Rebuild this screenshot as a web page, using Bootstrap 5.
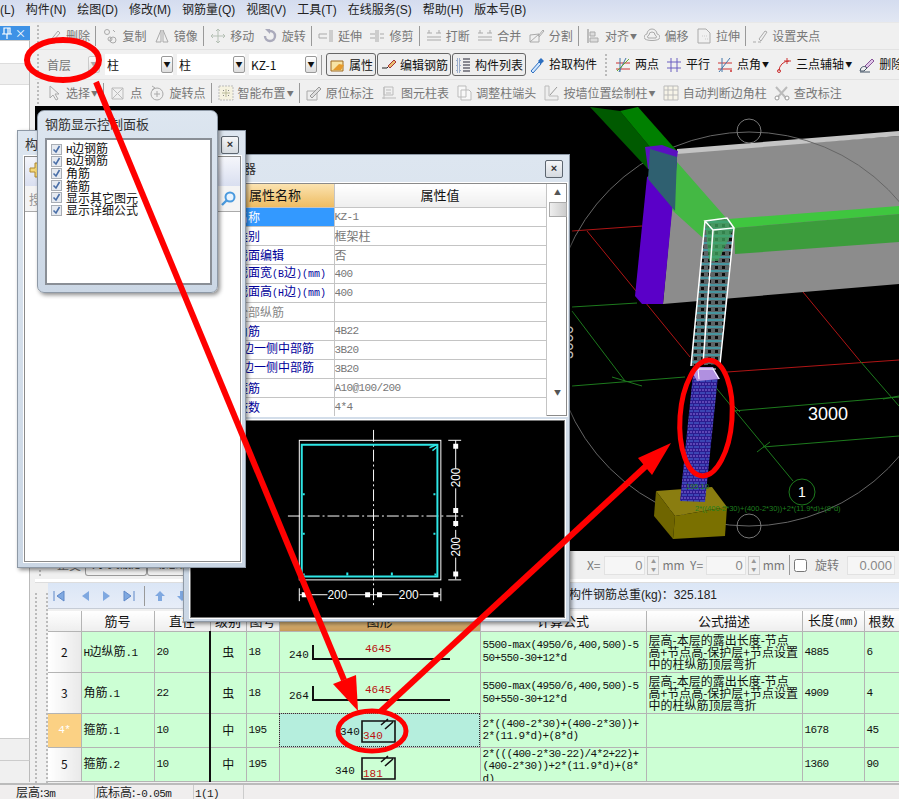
<!DOCTYPE html>
<html lang="zh">
<head>
  <meta charset="UTF-8">
  <title>钢筋显示控制面板</title>
  <link href="https://cdn.jsdelivr.net/npm/bootstrap@5.3.3/dist/css/bootstrap.min.css" rel="stylesheet">
  <style>
    html, body { margin: 0; background: #f0f0f0; }
    body { font: 12px/1.2 "Noto Sans CJK SC", sans-serif; color: #222; }
    .app { position: relative; width: 899px; height: 799px; overflow: hidden; }
    .menu-bar { height: 23px; gap: 11px; padding-top: 3px; background: linear-gradient(#d4dcef, #e2e7f3); border-bottom: 1px solid #e8e8e8; white-space: nowrap; font-family: "Liberation Sans", "Noto Sans CJK SC", sans-serif; }
    .work { height: 760px; }
    .dock { width: 30px; margin-right: 5px; padding-top: 3px; }
    .dock-head { height: 14px; background: #3e92e6; color: #fff; font-size: 11px; line-height: 14px; padding: 0 4px 0 2px; }
    .dock-pin { width: 10px; height: 12px; margin-top: 1px; }
    .dock-body { height: 698px; background: #fff; border-right: 1px solid #bbb; border-top: 1px solid #ccc; }
    .dock-band { height: 22px; margin-top: 22px; background: #f0f0f0; border-top: 1px solid #ddd; border-bottom: 1px solid #ddd; }
    .dock-foot { height: 22px; border-top: 1px solid #ccc; border-right: 1px solid #bbb; background: #f0f0f0; }
    .main-col { width: 864px; }
    .tool-row { white-space: nowrap; overflow: hidden; color: #777; padding-left: 2px; }
    .row-a { height: 27px; border-bottom: 1px solid #e2e2e2; }
    .row-b { height: 30px; border-bottom: 1px solid #e2e2e2; color: #111; }
    .row-c { height: 26px; }
    .grip { width: 2px; height: 22px; margin-right: 8px; border-left: 2px dotted #bbb; flex: none; }
    .row-a > .grip:first-child, .row-c > .grip:first-child { margin-right: 7px; }
    .row-b > .grip:first-child { margin-right: 6px; }
    .tool { display: inline-flex; align-items: center; gap: 4px; margin-right: 7.4px; }
    .row-b .tool { margin-right: 7px; }
    .row-c .tool { margin-right: 7.2px; }
    .ico { width: 16px; height: 16px; flex: none; }
    .tool-sep { width: 1px; height: 20px; background: #999; margin: 0 6px 0 -2px; flex: none; }
    .mini-caret { font-size: 7px; margin-left: -3px; }
    .combo { height: 21px; background: #fff; padding-left: 2px; line-height: 21px; margin-right: 4px; position: relative; width: 68px; flex: none; }
    .combo-off { background: #f0f0f0; color: #777; width: 55px; margin-right: 5px; }
    .combo-arrow { position: absolute; right: 0; top: 2px; width: 12px; height: 17px; background: linear-gradient(#fff, #ddd); border: 1px solid #999; border-radius: 2px; font-size: 7px; line-height: 15px; text-align: center; color: #111; }
    .combo-off .combo-arrow { color: #aaa; border-color: #ccc; }
    .press-btn { display: inline-flex; align-items: center; gap: 3px; height: 23px; padding: 0 2px 0 3px; margin-right: 1px; font-size: 12px; line-height: 1; color: #111; border: 1px solid #666; border-radius: 3px; background: #eee; flex: none; }
    .sep-tight { margin: 0 4px 0 0; }
    .pick-tool { margin-left: 2px; }
    .row-b .pick-tool { margin-right: 8px; }
    .view3d { height: 445px; background: #000; display: block; flex: none; }
    .opt-bar { height: 28px; color: #777; white-space: nowrap; }
    .opt-tab { height: 22px; padding: 2px 6px; border: 1px solid #999; border-top: 0; border-radius: 0 0 3px 3px; color: #333; }
    .opt-field { height: 19px; background: #f6f6f6; border: 1px solid #e2e2e2; text-align: right; padding-right: 2px; line-height: 17px; font-size: 13px; font-family: "Liberation Sans", sans-serif; color: #888; }
    .opt-spin { width: 12px; height: 19px; border: 1px solid #ccc; margin: 0 3px 0 2px; font-size: 5px; line-height: 8px; text-align: center; color: #999; }
    .strip { height: 4px; background: #fff; border-bottom: 1px solid #ddd; }
    .grid-grip { width: 13px; border-left: 2px dotted #bbb; border-right: 2px dotted #bbb; margin-top: 10px; }
    .nav-bar { height: 26px; margin-bottom: 2px; background: linear-gradient(#dbe6f6, #e7edf8); border-bottom: 1px solid #c6ccd6; white-space: nowrap; }
    .nav-ico { width: 14px; height: 14px; }
    .total-weight { margin-left: 364px; font-family: "Liberation Sans", "Noto Sans CJK SC", sans-serif; }
    .rebar-grid { table-layout: fixed; width: 851px; margin: 0; border-collapse: collapse; font-size: 12px; }
    .rebar-grid > :not(caption) > * > * { padding: 0 2px; border: 1px solid #b4b4b4; border-width: 0 1px 1px 0; background: #ccffd4; color: #111; vertical-align: middle; box-shadow: none; line-height: 12px; overflow: hidden; }
    .rebar-grid > thead > tr > th { height: 20px; background: linear-gradient(#fff, #eee); font-weight: 400; text-align: center; font-size: 13px; }
    .rebar-grid > thead > tr > th.col-on { background: linear-gradient(#f7dc9f, #c89a58); }
    .rebar-grid > tbody > tr > th { background: linear-gradient(90deg, #fff, #e9e9e9); font-weight: 400; text-align: center; }
    .rebar-grid > tbody > tr > th.row-on { background: #fbd184; color: #fff; }
    .rebar-grid td.split-col { border-right: 2px solid #111; }
    .rebar-grid td.shape-cell { padding: 0; }
    .rebar-grid td.shape-on { background: #b5eedd; outline: 1px dotted #333; outline-offset: -1px; }
    .shape-svg { display: block; width: 200px; }
    .formula-box { overflow: hidden; max-height: 36px; }
    .formula-clip { overflow: hidden; height: 33px; }
    .r-tall { height: 41px; } .r-short { height: 34px; }
    .lt { font-family: "Liberation Mono", monospace; font-size: 11px; letter-spacing: -.6px; }
    .rebar-grid td.lt-line { line-height: 12.5px; line-break: anywhere; padding-right: 5px; }
    .float-win { position: absolute; background: linear-gradient(#dde6f0, #cbd7e5); border: 1px solid #8e99a6; box-shadow: 2px 2px 4px rgba(0,0,0,.45); }
    .win-title { height: 25px; padding: 5px 0 0 7px; font-size: 13px; white-space: nowrap; color: #333; }
    .win-x { position: absolute; top: 5px; right: 6px; width: 18px; height: 18px; background: linear-gradient(#f5f6f8, #d5dae0); border: 1px solid #5d6670; border-radius: 2px; font: 700 11px/15px "Liberation Sans", sans-serif; text-align: center; color: #333; }
    .win-well { border: 1px solid #8a8a8a; outline: 1px solid #fff; background: #fff; }
    .win-props { left: 183px; top: 154px; width: 387px; height: 468px; }
    .win-list { left: 17px; top: 130px; width: 229px; height: 438px; }
    .win-panel { left: 37px; top: 110px; width: 181px; height: 183px; border-radius: 7px; }
    .panel-well { position: absolute; left: 7px; top: 27px; width: 167px; height: 147px; border: 2px solid #8a8f96; outline: 1px solid #fff; outline-offset: -3px; background: #fff; padding: 3px 0 0 4px; }
    .panel-check { display: flex; align-items: center; height: 12.2px; gap: 4px; font-size: 12px; line-height: 12px; color: #111; white-space: nowrap; }
    .panel-check input { appearance: none; width: 11px; height: 11px; margin: 0; flex: none; border: 1px solid #a9aeb5; background: #e6eaf0 url("data:image/svg+xml,%3Csvg xmlns='http://www.w3.org/2000/svg' viewBox='0 0 9 9'%3E%3Cpath d='M1.5 4.5 4 7l3.5-6' fill='none' stroke='%234a6fa8' stroke-width='1.6'/%3E%3C/svg%3E") center/9px no-repeat; }
    .list-well { position: absolute; left: 6px; top: 25px; width: 217px; height: 406px; }
    .list-strip { height: 29px; background: linear-gradient(#f5f6fb, #d9dff0); padding: 4px; }
    .list-search { height: 26px; background: #f4f4f4; border-bottom: 1px solid #aaa; color: #999; padding: 3px 4px; font-size: 13px; }
    .prop-well { position: absolute; left: 3px; top: 28px; width: 380px; height: 233px; }
    .prop-grid { table-layout: fixed; width: 358px; margin: 0; border-collapse: collapse; }
    .prop-grid > :not(caption) > * > * { padding: 0; height: 19px; border: 1px solid #c4c4c4; border-width: 0 1px 1px 0; background: #fff; color: #777; box-shadow: none; line-height: 12px; white-space: nowrap; overflow: hidden; vertical-align: middle; }
    .prop-grid > thead > tr > th { height: 23px; font-weight: 400; text-align: center; font-size: 13px; color: #111; background: linear-gradient(#fff, #eee); }
    .prop-grid > thead > tr > th.col-name { background: linear-gradient(#fbe3b0, #eebc62); text-align: left; padding-left: 61px; }
    .prop-grid > tbody > tr > td:first-child { padding-left: 48px; color: #00009a; }
    .prop-grid > tbody > tr > td.name-off { color: #888; }
    .prop-grid > tbody > tr > td.name-on { background: #3399ff; color: #fff; }
    .prop-grid .lt { color: #777; }
    .name-lt { font-family: "Liberation Mono", monospace; font-size: 10px; }
    .scroll-track { width: 18px; margin-left: 2px; font-size: 7px; text-align: center; color: #555; padding-top: 4px; }
    .scroll-thumb { height: 15px; margin: 6px 0 171px; background: linear-gradient(90deg, #eee, #ccc); border: 1px solid #aaa; }
    .cad-view { position: absolute; left: 6px; top: 265px; width: 375px; height: 198px; background: #000; border: 1px solid #777; outline: 1px solid #fff; display: block; }
    .status-bar { height: 16px; background: #f0eeee; border-top: 2px solid #bbb; white-space: nowrap; line-height: 14px; overflow: hidden; }
    .status-cell { border-right: 1px solid #ccc; padding-left: 1px; }
    .marks { position: absolute; left: 0; top: 0; width: 899px; height: 799px; pointer-events: none; }
  </style>
</head>
<body>
  <svg width="0" height="0" class="position-absolute">
    <symbol id="i-del" viewBox="0 0 16 16"><path d="M4 13 12 3l2 2-7 8zM2 15h7" fill="none" stroke="#aaa"/></symbol>
    <symbol id="i-copy" viewBox="0 0 16 16"><g fill="none" stroke="#aaa"><circle cx="5" cy="4" r="2.5"/><circle cx="11" cy="12" r="3"/><circle cx="8" cy="11" r="2"/><path d="m11 2 2 2"/></g></symbol>
    <symbol id="i-mirror" viewBox="0 0 16 16"><path d="M2 14 7 2v12zM14 14 9 2v12z" fill="none" stroke="#aaa"/></symbol>
    <symbol id="i-move" viewBox="0 0 16 16"><path d="M8 1v14M1 8h14M6 3l2-2 2 2M6 13l2 2 2-2M3 6 1 8l2 2M13 6l2 2-2 2" fill="none" stroke="#b5c0b5"/></symbol>
    <symbol id="i-rotate" viewBox="0 0 16 16"><path d="M8 3a5 5 0 1 1-5 5" fill="none" stroke="#aab" stroke-width="2.4"/><path d="M3 1h5v5z" fill="#aab"/></symbol>
    <symbol id="i-extend" viewBox="0 0 16 16"><path d="M1 6h8M1 10h8M1 6v4M12 2v12M14 2v12" fill="none" stroke="#aaa"/></symbol>
    <symbol id="i-trim" viewBox="0 0 16 16"><path d="M7 2v12M9 2v12M1 6h5M1 10h5M11 6h4M11 10h4" fill="none" stroke="#aaa"/></symbol>
    <symbol id="i-break" viewBox="0 0 16 16"><path d="M1 5h5M10 5h5M1 12h14M1 9h14M3 2v3M13 2v3" fill="none" stroke="#aaa"/></symbol>
    <symbol id="i-split" viewBox="0 0 16 16"><path d="M1 14V7l9-1v8zM1 14l9-8M9 8l5-6 1 1-5 6" fill="none" stroke="#aaa"/></symbol>
    <symbol id="i-align" viewBox="0 0 16 16"><path d="M3 1v14" stroke="#888" fill="none"/><path d="M5 4h5v4H5zM5 10h8v4H5z" fill="#ddd" stroke="#aaa"/></symbol>
    <symbol id="i-offset" viewBox="0 0 16 16"><path d="M1 11a3 3 0 0 1 2-5 5 5 0 0 1 10 0 3 3 0 0 1 2 5c-3 2-11 2-14 0zM4 10a2 2 0 0 1 1-3 3 3 0 0 1 6 0 2 2 0 0 1 1 3z" fill="none" stroke="#aaa"/></symbol>
    <symbol id="i-stretch" viewBox="0 0 16 16"><path d="M2 1h8l4 4v10H2z" fill="none" stroke="#aaa"/><path d="M6 8h6M9 11h3" stroke="#ccc" stroke-dasharray="1 1"/></symbol>
    <symbol id="i-clip" viewBox="0 0 16 16"><path d="m7 11 6-8 2 1-6 9zM1 14h3M6 14h3" fill="none" stroke="#aaa"/></symbol>
    <symbol id="i-prop" viewBox="0 0 16 16"><path d="M1 4h12v10H1z" fill="#f7e3a4" stroke="#a06a20"/><path d="M3 13 9 7l5 1-3 5z" fill="#e59a2c"/></symbol>
    <symbol id="i-edit" viewBox="0 0 16 16"><path d="M1 11h5l3-3" fill="none" stroke="#222"/><path d="m7 9 6-6 2 2-6 6z" fill="#e8c070" stroke="#a33"/></symbol>
    <symbol id="i-list" viewBox="0 0 16 16"><path d="M1 2h3v3H1zM1 7h3v3H1zM1 12h3v3H1z" fill="none" stroke="#4a6fa8" stroke-dasharray="1 1"/><path d="M7 2h7M7 5h7M7 8h7M7 11h7M7 14h7" stroke="#223"/></symbol>
    <symbol id="i-pick" viewBox="0 0 16 16"><path d="m2 14 8-9 2 2-8 9z" fill="#cfe6ff" stroke="#2d6fc0"/><path d="m9 4 3-3 3 3-3 3z" fill="#2d6fc0"/></symbol>
    <symbol id="i-two" viewBox="0 0 16 16"><path d="M1 6h14M1 12h14" stroke="#c33" fill="none"/><path d="M5 1v14M11 1 4 15" stroke="#47a" fill="none"/><path d="M2 14 14 2" stroke="#6a3"/></symbol>
    <symbol id="i-par" viewBox="0 0 16 16"><path d="M1 5h14M1 11h14M5 1v14M11 1v14" stroke="#6a5fc0" fill="none"/></symbol>
    <symbol id="i-ang" viewBox="0 0 16 16"><path d="M1 6h14M1 12h14" stroke="#c33" fill="none"/><path d="M5 1v14M2 15 13 1" stroke="#47a" fill="none"/><circle cx="14" cy="14" r="1" fill="#c33"/></symbol>
    <symbol id="i-three" viewBox="0 0 16 16"><path d="M3 14a10 10 0 0 1 10-10" fill="none" stroke="#c33"/><path d="M11 1v6M8 4h7" stroke="#c33"/><circle cx="3" cy="14" r="1.5" fill="none" stroke="#c33"/></symbol>
    <symbol id="i-erase" viewBox="0 0 16 16"><path d="m6 9 7-7 2 2-7 7z" fill="#e0c8e8" stroke="#859"/><path d="M2 11c2-2 4-2 6 0l-3 3H1zM1 15h10" fill="none" stroke="#456"/></symbol>
    <symbol id="i-sel" viewBox="0 0 16 16"><path d="M4 1v12l3-3 3 5 2-1-3-5h4z" fill="none" stroke="#aaa"/></symbol>
    <symbol id="i-pt" viewBox="0 0 16 16"><path d="M2 3h11v11H2zM2 3l11 11M13 3 2 14" fill="none" stroke="#bbb"/></symbol>
    <symbol id="i-rpt" viewBox="0 0 16 16"><circle cx="8" cy="9" r="6" fill="none" stroke="#aaa"/><path d="M8 6v6M5 9h6M3 1l3 2-3 2" fill="none" stroke="#aaa"/></symbol>
    <symbol id="i-smart" viewBox="0 0 16 16"><path d="M1 1h14v14H1z" fill="#f5f2e0" stroke="#bbb" stroke-dasharray="2 1"/><path d="M5 5h1v1H5zM10 5h1v1h-1zM5 10h1v1H5zM10 10h1v1h-1z" fill="#888"/><path d="M8 4v8M4 8h8" stroke="#bb9"/></symbol>
    <symbol id="i-pos" viewBox="0 0 16 16"><path d="M1 15V6h10v9z" fill="#eee" stroke="#aaa"/><path d="m4 11 9-9 2 2-9 9z" fill="#ddd" stroke="#999"/></symbol>
    <symbol id="i-tbl" viewBox="0 0 16 16"><path d="M3 2h9v8H3zM1 13h14M3 2v12M5 5h5M5 8h5" fill="none" stroke="#bbb"/></symbol>
    <symbol id="i-adj" viewBox="0 0 16 16"><path d="M2 1h8v11H2zM5 5h8l2 2v8H5z" fill="#f8f8f8" stroke="#bbb"/></symbol>
    <symbol id="i-wall" viewBox="0 0 16 16"><path d="M2 1h4v10h9v4H2z" fill="#eee" stroke="#bbb"/><path d="m7 10 7-8" stroke="#999"/></symbol>
    <symbol id="i-auto" viewBox="0 0 16 16"><path d="M1 1h14v14H1zM1 5h14M1 10h14M5 1v14M10 1v14" fill="#f7f4e8" stroke="#bbb"/></symbol>
    <symbol id="i-chk" viewBox="0 0 16 16"><path d="m2 2 10 11M13 2 3 13" stroke="#bbb" stroke-width="2" fill="none"/><circle cx="3" cy="13" r="2" fill="#fff" stroke="#999"/><circle cx="13" cy="13" r="2" fill="#fff" stroke="#999"/></symbol>
  </svg>

  <div class="app d-flex flex-column">
    <div class="menu-bar d-flex">
      <span>(L)</span><span>构件(N)</span><span>绘图(D)</span><span>修改(M)</span><span>钢筋量(Q)</span><span>视图(V)</span><span>工具(T)</span><span>在线服务(S)</span><span>帮助(H)</span><span>版本号(B)</span>
    </div>
    <div class="work d-flex">
      <div class="dock flex-shrink-0">
        <div class="dock-head d-flex justify-content-between">
          <svg class="dock-pin" viewBox="0 0 10 12"><path d="M2 1h6v6H2zM0 7h10M5 7v5M6 1v6" fill="none" stroke="#fff" stroke-width="1.2"/></svg><span>×</span>
        </div>
        <div class="dock-body"><div class="dock-band"></div></div>
        <div class="dock-foot"></div>
        <div class="dock-foot"></div>
      </div>
      <div class="main-col flex-shrink-0 d-flex flex-column">
        <div class="tool-row row-a d-flex align-items-center">
          <span class="grip"></span>
          <span class="tool"><svg class="ico"><use href="#i-del"/></svg>删除</span><span class="tool-sep"></span>
          <span class="tool"><svg class="ico"><use href="#i-copy"/></svg>复制</span>
          <span class="tool"><svg class="ico"><use href="#i-mirror"/></svg>镜像</span><span class="tool-sep"></span>
          <span class="tool"><svg class="ico"><use href="#i-move"/></svg>移动</span>
          <span class="tool"><svg class="ico"><use href="#i-rotate"/></svg>旋转</span><span class="tool-sep"></span>
          <span class="tool"><svg class="ico"><use href="#i-extend"/></svg>延伸</span>
          <span class="tool"><svg class="ico"><use href="#i-trim"/></svg>修剪</span><span class="tool-sep"></span>
          <span class="tool"><svg class="ico"><use href="#i-break"/></svg>打断</span>
          <span class="tool"><svg class="ico"><use href="#i-break"/></svg>合并</span>
          <span class="tool"><svg class="ico"><use href="#i-split"/></svg>分割</span><span class="tool-sep"></span>
          <span class="tool"><svg class="ico"><use href="#i-align"/></svg>对齐<span class="mini-caret">▼</span></span>
          <span class="tool"><svg class="ico"><use href="#i-offset"/></svg>偏移</span>
          <span class="tool"><svg class="ico"><use href="#i-stretch"/></svg>拉伸</span><span class="tool-sep"></span>
          <span class="tool"><svg class="ico"><use href="#i-clip"/></svg>设置夹点</span>
        </div>
        <div class="tool-row row-b d-flex align-items-center">
          <span class="grip"></span>
          <div class="combo combo-off">首层<span class="combo-arrow">▼</span></div>
          <div class="combo">柱<span class="combo-arrow">▼</span></div>
          <div class="combo">柱<span class="combo-arrow">▼</span></div>
          <div class="combo">KZ-1<span class="combo-arrow">▼</span></div>
          <span class="tool-sep sep-tight"></span>
          <button type="button" class="btn press-btn"><svg class="ico"><use href="#i-prop"/></svg>属性</button>
          <button type="button" class="btn press-btn"><svg class="ico"><use href="#i-edit"/></svg>编辑钢筋</button>
          <button type="button" class="btn press-btn"><svg class="ico"><use href="#i-list"/></svg>构件列表</button>
          <span class="tool pick-tool"><svg class="ico"><use href="#i-pick"/></svg>拾取构件</span>
          <span class="grip"></span>
          <span class="tool"><svg class="ico"><use href="#i-two"/></svg>两点</span>
          <span class="tool"><svg class="ico"><use href="#i-par"/></svg>平行</span>
          <span class="tool"><svg class="ico"><use href="#i-ang"/></svg>点角<span class="mini-caret">▼</span></span>
          <span class="tool"><svg class="ico"><use href="#i-three"/></svg>三点辅轴<span class="mini-caret">▼</span></span>
          <span class="tool"><svg class="ico"><use href="#i-erase"/></svg>删除</span>
        </div>
        <div class="tool-row row-c d-flex align-items-center">
          <span class="grip"></span>
          <span class="tool"><svg class="ico"><use href="#i-sel"/></svg>选择<span class="mini-caret">▼</span></span><span class="tool-sep"></span>
          <span class="tool"><svg class="ico"><use href="#i-pt"/></svg>点</span>
          <span class="tool"><svg class="ico"><use href="#i-rpt"/></svg>旋转点</span><span class="tool-sep"></span>
          <span class="tool"><svg class="ico"><use href="#i-smart"/></svg>智能布置<span class="mini-caret">▼</span></span><span class="tool-sep"></span>
          <span class="tool"><svg class="ico"><use href="#i-pos"/></svg>原位标注</span>
          <span class="tool"><svg class="ico"><use href="#i-tbl"/></svg>图元柱表</span>
          <span class="tool"><svg class="ico"><use href="#i-adj"/></svg>调整柱端头</span>
          <span class="tool"><svg class="ico"><use href="#i-wall"/></svg>按墙位置绘制柱<span class="mini-caret">▼</span></span>
          <span class="tool"><svg class="ico"><use href="#i-auto"/></svg>自动判断边角柱</span>
          <span class="tool"><svg class="ico"><use href="#i-chk"/></svg>查改标注</span>
        </div>

        <svg class="view3d" width="864" height="445" viewBox="35 107 864 445">
          <defs>
            <pattern id="hatch-top" width="7" height="7" patternUnits="userSpaceOnUse">
              <rect width="7" height="7" fill="#5c6466"/><rect x="1" y="1" width="3" height="3" fill="#0c0c0c"/><path d="M0 6h7" stroke="#2fc6d8"/>
            </pattern>
            <pattern id="hatch-low" width="6" height="6" patternUnits="userSpaceOnUse">
              <rect width="6" height="6" fill="#2c1c90"/><path d="M0 1h6" stroke="#8f70dc" stroke-dasharray="2 1"/><path d="M0 4h6" stroke="#4a70d8" stroke-dasharray="3 1"/>
            </pattern>
          </defs>
          <polygon points="677,153 899,137 899,285 663,305" fill="#8c8c8c"/>
          <polygon points="677,150 899,132 899,137 677,155" fill="#c4c4c4"/>
          <g stroke-width="1" fill="none">
            <path d="M572 232 642 227M587 232 690 358M727 373 899 361M803 293 860 362" stroke="#b01515"/>
            <path d="M572 308 637 304M572 312 625 382M572 387 685 378M612 378 642 387M713 385 793 482M733 412 899 398M733 406 740 413M763 448 899 437M757 453 770 443M860 362 899 407M883 400 899 397" stroke="#1d7a1d"/>
            <circle cx="749" cy="330" r="197" stroke="#666"/>
            <circle cx="749" cy="132" r="12" stroke="#777"/>
            <circle cx="749" cy="527" r="12" stroke="#777"/>
            <circle cx="802" cy="493" r="13" stroke="#1d7a1d"/>
          </g>
          <polygon points="590,108 620,112 650,148 648,170" fill="#005a00"/>
          <polygon points="620,112 638,108 677,152 650,148" fill="#008000"/>
          <polygon points="648,168 677,152 677,163 727,220 704,240 673,212" fill="#44b844"/>
          <polygon points="645,148 662,146 678,152 676,165 648,170" fill="#5a10c0"/>
          <polygon points="647,178 677,162 663,305 642,305 635,297" fill="#5a00c8"/>
          <polygon points="650,150 677,158 675,212 648,180" fill="#2f6070"/>
          <polygon points="728,220 899,207 899,215 734,229" fill="#3fc63f"/>
          <polygon points="734,229 899,215 899,243 735,255" fill="#3c9c3c"/>
          <polygon points="705,222 727,219 734,229 720,365 691,367" fill="url(#hatch-top)"/>
          <polygon points="705,222 727,219 734,229 718,262 709,262" fill="#3fa860" opacity=".75"/>
          <path d="M705 222 727 219 734 229 713 231zM705 222 691 367M713 231 703 365M734 229 720 365" fill="none" stroke="#fff" stroke-width="1.5"/>
          <polygon points="656,492 712,488 727,508 675,517" fill="#8a7d10"/>
          <polygon points="656,492 675,517 673,540 654,517" fill="#6f6500"/>
          <polygon points="675,517 727,508 725,537 673,540" fill="#7a7000"/>
          <polygon points="693,375 718,377 705,503 680,502" fill="url(#hatch-low)"/>
          <polygon points="693,375 698,368 713,368 720,380 697,382" fill="#b090e0"/>
          <path d="M698 370 699 380M713 370 719 380M698 370H716" stroke="#fff" fill="none"/>
          <text x="808" y="421" font-family="Liberation Sans, sans-serif" font-size="18" fill="#fff">3000</text>
          <text x="798" y="498" font-family="Liberation Sans, sans-serif" font-size="14" fill="#fff">1</text>
          <text x="695" y="512" font-family="Liberation Sans, sans-serif" font-size="7.5" fill="#1f7f1f">2*((400-2*30)+(400-2*30))+2*(11.9*d)+(8*d)</text>
          <text x="686" y="490" font-family="Liberation Sans, sans-serif" font-size="7.5" fill="#1f7f1f">195:10</text>
          <text transform="translate(573 360) rotate(-90)" font-family="Liberation Sans, sans-serif" font-size="15" fill="#fff">3000</text>
        </svg>

        <div class="opt-bar d-flex align-items-center">
          <span class="grip ms-1 me-3"></span>
          <span class="me-1">正交</span>
          <span class="opt-tab">对象捕捉</span>
          <span class="opt-tab">动态输入</span>
          <span class="ms-auto me-1">X=</span>
          <span class="opt-field" style="width:41px">0</span><span class="opt-spin">▲<br>▼</span>
          <span>mm&nbsp;&nbsp;Y=&nbsp;</span>
          <span class="opt-field" style="width:40px">0</span><span class="opt-spin">▲<br>▼</span>
          <span>mm</span>
          <span class="tool-sep ms-1 me-1"></span>
          <input type="checkbox" class="me-2">
          <span class="me-2">旋转</span>
          <span class="opt-field me-1" style="width:48px">0.000</span>
        </div>
        <div class="strip"></div>

        <div class="d-flex flex-grow-1">
          <div class="grid-grip flex-shrink-0"></div>
          <div class="flex-grow-1">
            <div class="nav-bar d-flex align-items-center ps-1">
              <svg class="nav-ico me-2" viewBox="0 0 14 14"><path d="M2 2v10M12 2v10L5 7z" fill="#7fa8e0" stroke="#5f88c8"/></svg>
              <svg class="nav-ico mx-1" viewBox="0 0 14 14"><path d="M11 2v10L4 7z" fill="#7fa8e0"/></svg>
              <svg class="nav-ico mx-1" viewBox="0 0 14 14"><path d="M3 2v10l7-5z" fill="#7fa8e0"/></svg>
              <svg class="nav-ico mx-1" viewBox="0 0 14 14"><path d="M12 2v10M2 2v10l7-5z" fill="#7fa8e0" stroke="#5f88c8"/></svg>
              <span class="tool-sep mx-1"></span>
              <svg class="nav-ico mx-1" viewBox="0 0 14 14"><path d="M7 2 2 7h3v5h4V7h3z" fill="#7fa8e0"/></svg>
              <svg class="nav-ico mx-1" viewBox="0 0 14 14"><path d="M7 12 2 7h3V2h4v5h3z" fill="#7fa8e0"/></svg>
              <span class="total-weight">单构件钢筋总重(kg)：325.181</span>
            </div>
            <table class="table rebar-grid">
              <colgroup><col width="33"><col width="73"><col width="56"><col width="36"><col width="33"><col width="201"><col width="166"><col width="156"><col width="62"><col width="35"></colgroup>
              <thead>
                <tr><th></th><th>筋号</th><th>直径</th><th>级别</th><th>图号</th><th class="col-on">图形</th><th>计算公式</th><th>公式描述</th><th>长度<span class="lt">(mm)</span></th><th>根数</th></tr>
              </thead>
              <tbody>
                <tr class="r-tall">
                  <th>2</th><td><span class="lt">H</span>边纵筋<span class="lt">.1</span></td><td class="split-col lt">20</td><td class="text-center">虫</td><td class="lt">18</td>
                  <td class="shape-cell"><svg class="shape-svg" height="40" viewBox="0 0 200 40"><text x="9" y="26" font-family="Liberation Mono, monospace" font-size="11" fill="#111">240</text><path d="M33 13v14h137" fill="none" stroke="#111" stroke-width="2"/><text x="85" y="20" font-family="Liberation Mono, monospace" font-size="11" fill="#b11">4645</text></svg></td>
                  <td class="lt lt-line">5500-max(4950/6,400,500)-550+550-30+12*d</td>
                  <td><div class="formula-box">层高-本层的露出长度-节点高+节点高-保护层+节点设置中的柱纵筋顶层弯折</div></td>
                  <td class="lt">4885</td><td class="lt">6</td>
                </tr>
                <tr class="r-tall">
                  <th>3</th><td>角筋<span class="lt">.1</span></td><td class="split-col lt">22</td><td class="text-center">虫</td><td class="lt">18</td>
                  <td class="shape-cell"><svg class="shape-svg" height="40" viewBox="0 0 200 40"><text x="9" y="26" font-family="Liberation Mono, monospace" font-size="11" fill="#111">264</text><path d="M33 13v14h137" fill="none" stroke="#111" stroke-width="2"/><text x="85" y="20" font-family="Liberation Mono, monospace" font-size="11" fill="#b11">4645</text></svg></td>
                  <td class="lt lt-line">5500-max(4950/6,400,500)-550+550-30+12*d</td>
                  <td><div class="formula-box">层高-本层的露出长度-节点高+节点高-保护层+节点设置中的柱纵筋顶层弯折</div></td>
                  <td class="lt">4909</td><td class="lt">4</td>
                </tr>
                <tr class="r-short">
                  <th class="row-on lt">4*</th><td>箍筋<span class="lt">.1</span></td><td class="split-col lt">10</td><td class="text-center">中</td><td class="lt">195</td>
                  <td class="shape-cell shape-on"><svg class="shape-svg" height="33" viewBox="0 0 200 33"><text x="60" y="21" font-family="Liberation Mono, monospace" font-size="11" fill="#111">340</text><path d="M82 7h33v21H82zM105 15l8-7M101 11l7-6" fill="none" stroke="#111" stroke-width="1.6"/><text x="83" y="25" font-family="Liberation Mono, monospace" font-size="11" fill="#b11">340</text></svg></td>
                  <td class="lt lt-line">2*((400-2*30)+(400-2*30))+2*(11.9*d)+(8*d)</td>
                  <td></td><td class="lt">1678</td><td class="lt">45</td>
                </tr>
                <tr class="r-short">
                  <th>5</th><td>箍筋<span class="lt">.2</span></td><td class="split-col lt">10</td><td class="text-center">中</td><td class="lt">195</td>
                  <td class="shape-cell"><svg class="shape-svg" height="33" viewBox="0 0 200 33"><text x="55" y="26" font-family="Liberation Mono, monospace" font-size="11" fill="#111">340</text><path d="M82 10h33v21H82zM105 18l8-7M101 14l7-6" fill="none" stroke="#111" stroke-width="1.6"/><text x="83" y="29" font-family="Liberation Mono, monospace" font-size="11" fill="#b11">181</text></svg></td>
                  <td class="lt lt-line"><div class="formula-clip">2*(((400-2*30-22)/4*2+22)+(400-2*30))+2*(11.9*d)+(8*d)</div></td>
                  <td></td><td class="lt">1360</td><td class="lt">90</td>
                </tr>
              </tbody>
            </table>
          </div>
        </div>
      </div>
    </div>
    <div class="status-bar d-flex">
      <span class="status-cell ps-3" style="width:95px">层高:<span class="lt">3m</span></span>
      <span class="status-cell" style="width:99px">底标高:<span class="lt">-0.05m</span></span>
      <span class="status-cell" style="width:50px"><span class="lt">1(1)</span></span>
    </div>

    <!-- floating windows, back to front -->
    <div class="float-win win-props">
      <div class="win-title">属性编辑器</div>
      <span class="win-x">×</span>
      <div class="prop-well win-well d-flex">
        <table class="table prop-grid">
          <colgroup><col width="146"><col width="212"></colgroup>
          <thead><tr><th class="col-name">属性名称</th><th>属性值</th></tr></thead>
          <tbody>
            <tr><td class="name-on">名称</td><td class="lt">KZ-1</td></tr>
            <tr><td>类别</td><td>框架柱</td></tr>
            <tr><td>截面编辑</td><td>否</td></tr>
            <tr><td>截面宽<span class="name-lt">(B</span>边<span class="name-lt">)(mm)</span></td><td class="lt">400</td></tr>
            <tr><td>截面高<span class="name-lt">(H</span>边<span class="name-lt">)(mm)</span></td><td class="lt">400</td></tr>
            <tr><td class="name-off">全部纵筋</td><td></td></tr>
            <tr><td>角筋</td><td class="lt">4B22</td></tr>
            <tr><td><span class="name-lt">B</span>边一侧中部筋</td><td class="lt">3B20</td></tr>
            <tr><td><span class="name-lt">H</span>边一侧中部筋</td><td class="lt">3B20</td></tr>
            <tr><td>箍筋</td><td class="lt">A10@100/200</td></tr>
            <tr><td>肢数</td><td class="lt">4*4</td></tr>
          </tbody>
        </table>
        <div class="scroll-track flex-shrink-0">▲<div class="scroll-thumb"></div>▼</div>
      </div>
      <svg class="cad-view" viewBox="190 420 375 198">
        <g fill="none" stroke="#fff">
          <rect x="298.5" y="439.5" width="143" height="141"/>
          <path d="M373.5 429v177M287 516h177" stroke-dasharray="12 3 2 3"/>
          <path d="M449 439.5h13M449 580.5h13M456.5 439.5V468M456.5 488v39M456.5 530v8M456.5 558v22"/>
          <path d="M298.5 589v13M441.5 589v13M298.5 595.5H327M348 595.5h51M420 595.5h21"/>
        </g>
        <path d="M301 577V444h137v133z" fill="none" stroke="#2ee6e6" stroke-width="2"/>
        <path d="m430 447 7-3M433 450l5-4" stroke="#2ee6e6" stroke-width="1.5"/>
        <path d="M302 494h2M302 534h2M434 494h2M434 534h2M347 576v-3M392 576v-3M302 575h2M437 575h-2" stroke="#2ee6e6" stroke-width="2"/>
        <path d="M454 443h5v5h-5zM454 508h5v5h-5zM454 521h5v5h-5zM454 572h5v5h-5zM301 593h5v5h-5zM365 593h5v5h-5zM377 593h5v5h-5zM434 593h5v5h-5z" fill="#fff"/>
        <g fill="#fff" font-family="Liberation Sans, sans-serif" font-size="12">
          <text x="327" y="600" textLength="20">200</text>
          <text x="399" y="600" textLength="20">200</text>
          <text transform="translate(461 487) rotate(-90)" textLength="20">200</text>
          <text transform="translate(461 557) rotate(-90)" textLength="20">200</text>
        </g>
      </svg>
    </div>

    <div class="float-win win-list">
      <div class="win-title">构件列表</div>
      <span class="win-x">×</span>
      <div class="list-well win-well">
        <div class="list-strip"><svg class="ico" viewBox="0 0 16 16"><path d="M6 1h4v5h5v4h-5v5H6v-5H1V6h5z" fill="#f5d878" stroke="#b08a30"/></svg></div>
        <div class="list-search d-flex justify-content-between align-items-center">搜索构件...<svg class="ico" viewBox="0 0 16 16"><circle cx="10" cy="6" r="4.5" fill="#e8f4ff" stroke="#4a9ade" stroke-width="2"/><path d="M7 9 2 14" stroke="#4a9ade" stroke-width="2.4"/></svg></div>
      </div>
    </div>

    <div class="float-win win-panel">
      <div class="win-title">钢筋显示控制面板</div>
      <div class="panel-well">
        <label class="panel-check"><input type="checkbox" checked><span><span class="lt">H</span>边钢筋</span></label>
        <label class="panel-check"><input type="checkbox" checked><span><span class="lt">B</span>边钢筋</span></label>
        <label class="panel-check"><input type="checkbox" checked>角筋</label>
        <label class="panel-check"><input type="checkbox" checked>箍筋</label>
        <label class="panel-check"><input type="checkbox" checked>显示其它图元</label>
        <label class="panel-check"><input type="checkbox" checked>显示详细公式</label>
      </div>
    </div>

    <svg class="marks" viewBox="0 0 899 799">
      <g fill="none" stroke="#f00">
        <ellipse cx="63" cy="60" rx="36" ry="20" stroke-width="6"/>
        <path d="M96 82 344 680" stroke-width="6"/>
        <ellipse cx="372" cy="731" rx="34" ry="20" stroke-width="5"/>
        <path d="M380 712 646 466" stroke-width="6"/>
        <ellipse cx="706" cy="418" rx="26" ry="58" stroke-width="5" transform="rotate(4 706 418)"/>
      </g>
      <polygon points="358,711 333,684 356,675" fill="#f00"/>
      <polygon points="671,443 638,458 652,475" fill="#f00"/>
    </svg>
  </div>
  <script src="https://cdn.jsdelivr.net/npm/bootstrap@5.3.3/dist/js/bootstrap.bundle.min.js"></script>
</body>
</html>
